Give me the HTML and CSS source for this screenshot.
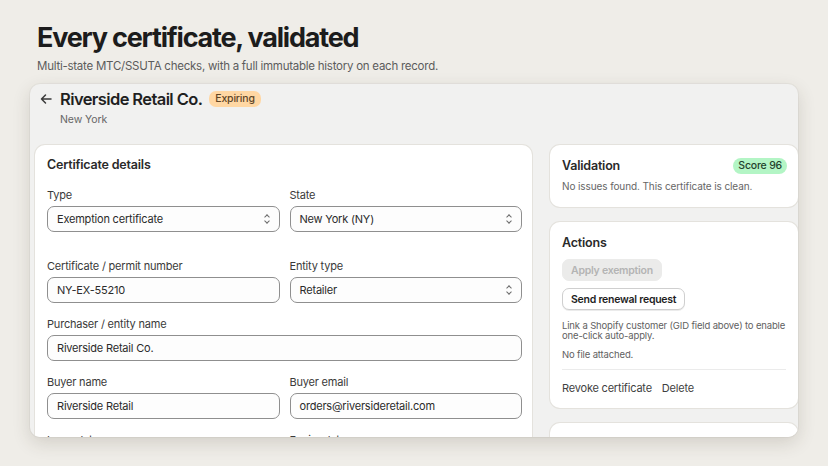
FILE: index.html
```html
<!DOCTYPE html>
<html lang="en">
<head>
    <meta charset="UTF-8">
    <meta name="viewport" content="width=device-width, initial-scale=1.0">
    <title>Every certificate, validated</title>
    <link rel="stylesheet" href="styles.css">
</head>
<body>
    <div class="page">
        <h1>Every certificate, validated</h1>
        <p class="lead">Multi-state MTC/SSUTA checks, with a full immutable history on each record.</p>

        <div class="window">
            <!-- Record header -->
            <div class="record-header">
                <div class="title-row">
                    <svg class="back" width="14" height="14" viewBox="0 0 14 14" fill="none" stroke="#3a3a3a" stroke-width="1.5" stroke-linecap="round" stroke-linejoin="round">
                        <path d="M12 7H2.5M6.5 3L2.5 7l4 4"/>
                    </svg>
                    <h2>Riverside Retail Co.</h2>
                    <span class="badge expiring">Expiring</span>
                </div>
                <div class="subtitle">New York</div>
            </div>

            <div class="layout">
                <!-- Certificate form -->
                <div class="card details">
                    <h3>Certificate details</h3>
                    <div class="grid">
                        <div class="field">
                            <label>Type</label>
                            <div class="select">Exemption certificate<span class="chev"></span></div>
                        </div>
                        <div class="field">
                            <label>State</label>
                            <div class="select">New York (NY)<span class="chev"></span></div>
                        </div>
                        <div class="field">
                            <label>Certificate / permit number</label>
                            <div class="input">NY-EX-55210</div>
                        </div>
                        <div class="field">
                            <label>Entity type</label>
                            <div class="select">Retailer<span class="chev"></span></div>
                        </div>
                        <div class="field wide">
                            <label>Purchaser / entity name</label>
                            <div class="input">Riverside Retail Co.</div>
                        </div>
                        <div class="field">
                            <label>Buyer name</label>
                            <div class="input">Riverside Retail</div>
                        </div>
                        <div class="field">
                            <label>Buyer email</label>
                            <div class="input">orders@riversideretail.com</div>
                        </div>
                        <div class="field">
                            <label>Issue date</label>
                            <div class="input">2024-01-15</div>
                        </div>
                        <div class="field">
                            <label>Expiry date</label>
                            <div class="input">2025-01-15</div>
                        </div>
                    </div>
                </div>

                <!-- Side column -->
                <div class="side">
                    <div class="card">
                        <div class="card-head">
                            <h3>Validation</h3>
                            <span class="badge score">Score 96</span>
                        </div>
                        <p class="muted">No issues found. This certificate is clean.</p>
                    </div>

                    <div class="card actions">
                        <h3>Actions</h3>
                        <button class="btn disabled" disabled>Apply exemption</button>
                        <button class="btn">Send renewal request</button>
                        <p class="hint">Link a Shopify customer (GID field above) to enable one-click auto-apply.</p>
                        <p class="hint">No file attached.</p>
                        <div class="links">
                            <span>Revoke certificate</span>
                            <span>Delete</span>
                        </div>
                    </div>

                    <div class="card empty"></div>
                </div>
            </div>
        </div>
    </div>
</body>
</html>
```

FILE: styles.css
```css
* {
    box-sizing: border-box;
}

body {
    margin: 0;
    font-family: Inter, "Noto Sans", sans-serif;
    background-color: #efede8;
    color: #303030;
    height: 466px;
    overflow: hidden;
}

.page {
    padding: 20px 30px 0 30px;
}

h1 {
    margin: 0 0 0 7px;
    font-size: 27px;
    font-weight: 700;
    letter-spacing: -1.2px;
    line-height: 36px;
    color: #1c1c1c;
}

.lead {
    margin: 3px 0 0 7px;
    font-size: 11.5px;
    letter-spacing: -0.25px;
    color: #5c5c5c;
}

.window {
    margin-top: 11px;
    height: 353px;
    overflow: hidden;
    background-color: #f1f1f0;
    border-radius: 10px;
    box-shadow: 0 6px 18px rgba(60, 50, 30, 0.16), 0 0 0 1px rgba(0, 0, 0, 0.03);
}

.record-header {
    padding: 5px 0 0 9px;
}

.title-row {
    display: flex;
    align-items: center;
    height: 20px;
}

.back {
    margin-right: 7px;
}

h2 {
    margin: 0;
    font-size: 16.5px;
    font-weight: 600;
    color: #1f1f1f;
    letter-spacing: -0.6px;
}

.badge {
    display: inline-block;
    font-size: 10.5px;
    font-weight: 500;
    letter-spacing: -0.2px;
    padding: 2px 6px;
    border-radius: 7px;
    line-height: 12px;
}

.expiring {
    margin-left: 7px;
    background-color: #ffd7a3;
    color: #5e4526;
}

.subtitle {
    margin: 4px 0 0 21px;
    font-size: 10.5px;
    letter-spacing: -0.1px;
    color: #666666;
}

.layout {
    display: grid;
    grid-template-columns: 497px 248px;
    gap: 18px;
    padding: 19px 0 0 5px;
    align-items: start;
}

.card {
    background-color: #ffffff;
    border-radius: 10px;
    box-shadow: 0 0 0 1px #e4e2dd, 0 1px 1px rgba(0, 0, 0, 0.04);
    padding: 12px;
}

h3 {
    margin: 0;
    font-size: 12.5px;
    font-weight: 600;
    letter-spacing: -0.2px;
    color: #2a2a2a;
    line-height: 16px;
}

.details {
    padding: 12px 10px 12px 12px;
}

.details h3 {
    margin: 0 0 15px 0;
}

.grid {
    display: grid;
    grid-template-columns: 1fr 1fr;
    column-gap: 10px;
    row-gap: 14px;
}

.field {
    display: flex;
    flex-direction: column;
}

.field:nth-child(1),
.field:nth-child(2) {
    margin-bottom: 13px;
}

.wide {
    grid-column: span 2;
}

label {
    font-size: 11px;
    letter-spacing: -0.2px;
    color: #3a3a3a;
    margin-bottom: 4px;
    line-height: 14px;
}

.select,
.input {
    position: relative;
    height: 26px;
    border: 1px solid #8f8f8f;
    border-radius: 7px;
    padding: 0 9px;
    font-size: 11px;
    letter-spacing: -0.2px;
    display: flex;
    align-items: center;
    color: #2b2b2b;
    background-color: #fdfdfd;
}

.chev {
    position: absolute;
    right: 9px;
    top: 7px;
    width: 6px;
    height: 10px;
}

.chev::before,
.chev::after {
    content: "";
    position: absolute;
    left: 1px;
    width: 3px;
    height: 3px;
    border-left: 1px solid #6a6a6a;
    border-top: 1px solid #6a6a6a;
}

.chev::before {
    top: 1px;
    transform: rotate(45deg);
}

.chev::after {
    bottom: 1px;
    transform: rotate(225deg);
}

.side {
    display: flex;
    flex-direction: column;
    gap: 15px;
}

.side .card:first-child {
    padding: 13px 12px 15px 12px;
}

.card-head {
    display: flex;
    justify-content: space-between;
    align-items: center;
}

.score {
    background-color: #b3f5c5;
    color: #24422d;
    border-radius: 8px;
    padding: 2px 5px;
    margin-right: -1px;
}

.muted {
    margin: 6px 0 0 0;
    font-size: 10px;
    letter-spacing: -0.1px;
    color: #666666;
}

.actions h3 {
    margin: 1px 0 8px 0;
}

.btn {
    display: block;
    font-family: inherit;
    font-size: 10.5px;
    font-weight: 600;
    letter-spacing: -0.25px;
    padding: 0 8px;
    height: 22px;
    border-radius: 7px;
    border: 1px solid #cfcfcf;
    background-color: #ffffff;
    color: #1e1e1e;
    box-shadow: 0 1px 0 rgba(0, 0, 0, 0.08);
    margin-bottom: 7px;
}

.btn.disabled {
    background-color: #ebebea;
    border-color: #ebebea;
    color: #b4b4b4;
    box-shadow: none;
}

.hint {
    margin: 11px 0 0 0;
    font-size: 9.5px;
    letter-spacing: -0.15px;
    line-height: 10px;
    color: #616161;
}

.hint + .hint {
    margin-top: 9px;
}

.links {
    margin-top: 9px;
    border-top: 1px solid #ebebeb;
    padding: 11px 0 1px 0;
    display: flex;
    gap: 10px;
    font-size: 11px;
    letter-spacing: -0.2px;
    color: #3f3f3f;
}

.empty {
    height: 40px;
}
```
